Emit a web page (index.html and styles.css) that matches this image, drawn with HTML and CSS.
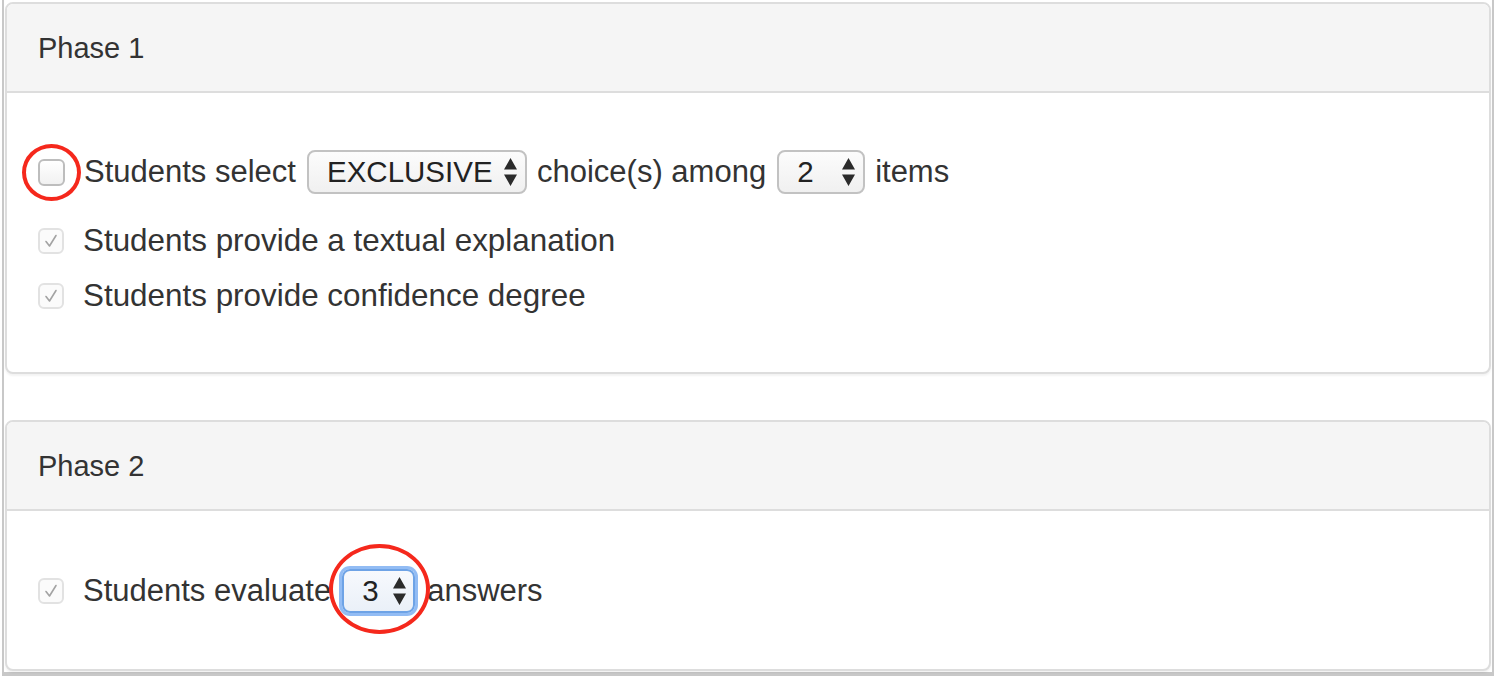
FILE: index.html
```html
<!DOCTYPE html>
<html>
<head>
<meta charset="utf-8">
<link rel="stylesheet" href="styles.css">
</head>
<body>
<div class="frame">
  <section class="panel panel-one">
    <header class="panel-heading">Phase 1</header>
    <div class="panel-body body-one">
      <div class="row row-select">
        <span class="mark-wrap">
          <span class="cb"></span>
          <span class="ring ring-cb"></span>
        </span>
        <span class="txt">Students select</span>
        <span class="sel sel-wide"><span class="sel-val">EXCLUSIVE</span><svg class="arrows" width="13" height="30" viewBox="0 0 13 30"><path d="M0 12.5 L6.5 1 L13 12.5 Z M0 17.5 L6.5 29 L13 17.5 Z" fill="#2b2b2b"/></svg></span>
        <span class="txt">choice(s) among</span>
        <span class="sel sel-num"><span class="sel-val">2</span><svg class="arrows" width="13" height="30" viewBox="0 0 13 30"><path d="M0 12.5 L6.5 1 L13 12.5 Z M0 17.5 L6.5 29 L13 17.5 Z" fill="#2b2b2b"/></svg></span>
        <span class="txt">items</span>
      </div>
      <div class="row row-check gap-a">
        <span class="cb cb-checked"><svg width="16" height="16" viewBox="0 0 16 16"><path d="M3 8.5 L6.5 13 L13 2.5" fill="none" stroke="#a3a3a3" stroke-width="1.6" stroke-linecap="round" stroke-linejoin="round"/></svg></span>
        <span class="txt">Students provide a textual explanation</span>
      </div>
      <div class="row row-check gap-b">
        <span class="cb cb-checked"><svg width="16" height="16" viewBox="0 0 16 16"><path d="M3 8.5 L6.5 13 L13 2.5" fill="none" stroke="#a3a3a3" stroke-width="1.6" stroke-linecap="round" stroke-linejoin="round"/></svg></span>
        <span class="txt">Students provide confidence degree</span>
      </div>
    </div>
  </section>

  <section class="panel panel-two">
    <header class="panel-heading">Phase 2</header>
    <div class="panel-body body-two">
      <div class="row row-select">
        <span class="cb cb-checked"><svg width="16" height="16" viewBox="0 0 16 16"><path d="M3 8.5 L6.5 13 L13 2.5" fill="none" stroke="#a3a3a3" stroke-width="1.6" stroke-linecap="round" stroke-linejoin="round"/></svg></span>
        <span class="txt">Students evaluate</span>
        <span class="mark-wrap">
          <span class="sel sel-focus"><span class="sel-val">3</span><svg class="arrows" width="13" height="30" viewBox="0 0 13 30"><path d="M0 12.5 L6.5 1 L13 12.5 Z M0 17.5 L6.5 29 L13 17.5 Z" fill="#2b2b2b"/></svg></span>
          <span class="ring ring-sel"></span>
        </span>
        <span class="txt">answers</span>
      </div>
    </div>
  </section>
</div>
</body>
</html>
```

FILE: styles.css
```css
* { box-sizing: border-box; }

html, body {
  margin: 0;
  padding: 0;
  background: #ffffff;
}

body {
  font-family: "Liberation Sans", Arial, Helvetica, sans-serif;
  color: #333333;
  width: 1496px;
  height: 676px;
  overflow: hidden;
}

.frame {
  margin-left: 2px;
  width: 1492px;
  border-left: 2px solid #c8c8c8;
  border-right: 2px solid #c8c8c8;
  border-bottom: 4px solid #c8c8c8;
  padding: 2px 1px 1px 1px;
  display: flex;
  flex-direction: column;
  gap: 46px;
}

.panel {
  border: 2px solid #dddddd;
  border-radius: 8px;
  background: #ffffff;
  box-shadow: 0 2px 2px rgba(0, 0, 0, 0.05);
}

.panel-heading {
  height: 89px;
  background: #f5f5f5;
  border-bottom: 2px solid #dddddd;
  border-radius: 6px 6px 0 0;
  display: flex;
  align-items: center;
  padding-left: 31px;
  padding-top: 1px;
  font-size: 29px;
  color: #333333;
}

.panel-body {
  padding-left: 31px;
  display: flex;
  flex-direction: column;
}

.body-one {
  height: 279px;
  padding-top: 57px;
}

.body-two {
  height: 158px;
  padding-top: 58px;
}

.row {
  display: flex;
  align-items: center;
  font-size: 31.4px;
}

.row-select { height: 44px; font-size: 31px; }
.row-check { height: 40px; }
.gap-a { margin-top: 27px; }
.gap-b { margin-top: 15px; }

.txt {
  white-space: nowrap;
  line-height: 40px;
}

.row-select .txt { margin-right: 11px; }
.row-select .sel { margin-right: 10px; }

.cb {
  flex: none;
  width: 27px;
  height: 27px;
  border-radius: 6px;
  border: 2px solid #bdbdbd;
  background: linear-gradient(#ffffff, #f1f1f1);
  margin-right: 19px;
  display: flex;
  align-items: center;
  justify-content: center;
}

.cb-checked {
  width: 26px;
  height: 26px;
  border: 2px solid #e2e2e2;
  background: #fbfbfb;
}

.mark-wrap {
  position: relative;
  display: flex;
  align-items: center;
}

.row-select .mark-wrap .sel { margin-right: 12px; }

.sel {
  flex: none;
  height: 44px;
  border: 2px solid #c2c2c2;
  border-radius: 8px;
  background: linear-gradient(#fcfcfc, #f0f0f0);
  display: flex;
  align-items: center;
  justify-content: space-between;
  padding: 0 8px 0 18px;
  font-size: 29.5px;
  color: #222222;
}

.sel-wide { width: 220px; }
.sel-num { width: 88px; }

.sel-focus {
  width: 73px;
  border-color: #6ea3e6;
  background: linear-gradient(#f7f9fd, #eaf0f8);
  box-shadow: 0 0 0 3px rgba(110, 165, 240, 0.75);
  padding-left: 18px;
  padding-right: 7px;
}

.arrows { flex: none; display: block; }

.ring {
  position: absolute;
  border: 4.5px solid #f5281c;
  border-radius: 50%;
  pointer-events: none;
}

.ring-cb {
  left: -16px;
  top: -15px;
  width: 59px;
  height: 57px;
}

.ring-sel {
  left: -13px;
  top: -25px;
  width: 101px;
  height: 90px;
}
```
